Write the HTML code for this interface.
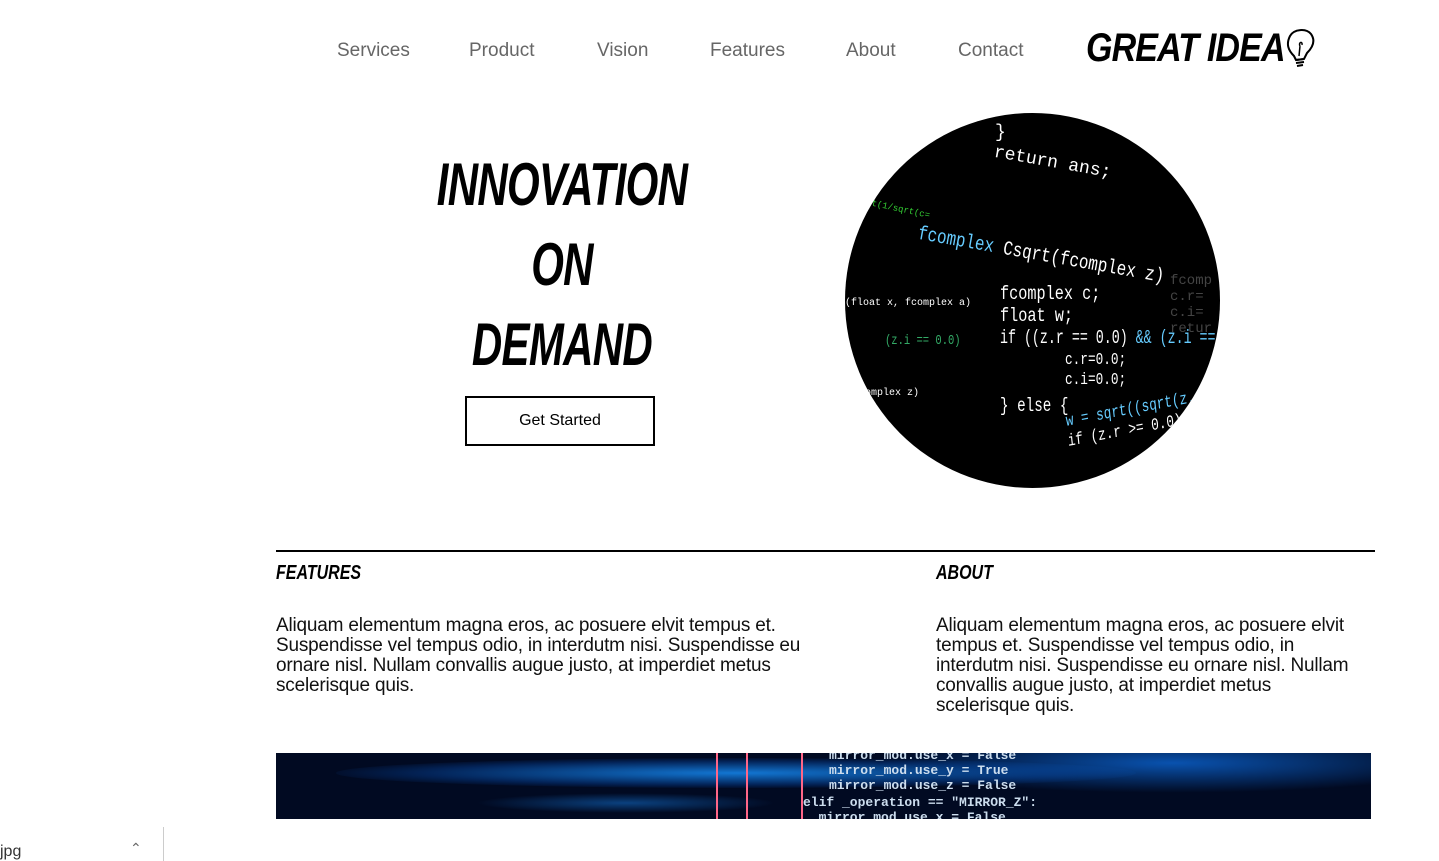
<!DOCTYPE html>
<html><head><meta charset="utf-8"><style>
body{margin:0;width:1439px;height:861px;background:#fff;position:relative;overflow:hidden;font-family:"Liberation Sans",sans-serif}
.nav{position:absolute;top:40px;font-size:19px;color:#666}
.hd{position:absolute;font-weight:bold;font-style:italic;color:#000;transform-origin:left top;white-space:nowrap}
.hl{position:absolute;left:362px;width:400px;text-align:center;font-weight:bold;font-style:italic;font-size:60px;transform:scaleX(0.7);transform-origin:center top;letter-spacing:-1px}
.p{position:absolute;font-size:19px;line-height:20px;color:#111;letter-spacing:-0.2px}
.circle{position:absolute;left:845px;top:113px;width:375px;height:375px;border-radius:50%;background:#000;overflow:hidden;font-family:"Liberation Mono",monospace}
.circle div{position:absolute;white-space:nowrap}
</style></head><body>
<div class="nav" style="left:337px">Services</div>
<div class="nav" style="left:469px">Product</div>
<div class="nav" style="left:597px">Vision</div>
<div class="nav" style="left:710px">Features</div>
<div class="nav" style="left:846px">About</div>
<div class="nav" style="left:958px">Contact</div>
<div class="hd" style="left:1086px;top:26px;font-size:40px;transform:scaleX(0.85);letter-spacing:-1px">GREAT IDEA</div>
<svg style="position:absolute;left:1282px;top:26px" width="34" height="46" viewBox="0 0 34 46"><path d="M12 30 C6 24 4 18 8 10 C12 3 24 2 29 8 C34 15 30 22 25 27 L22 33 L14 34 Z" fill="none" stroke="#000" stroke-width="2"/><path d="M14 34 L22 33 M14 37 L22 36 M15 40 L21 39" stroke="#000" stroke-width="2"/><path d="M17 30 L18 20 M18 20 C16 16 21 15 20 19" fill="none" stroke="#000" stroke-width="1.5"/></svg>

<div class="hl" style="top:150px">INNOVATION</div>
<div class="hl" style="top:230px">ON</div>
<div class="hl" style="top:310px">DEMAND</div>
<div style="position:absolute;left:465px;top:396px;width:186px;height:46px;border:2px solid #000;font-size:16px;line-height:46px;text-align:center">Get Started</div>

<div class="circle">
<div style="left:150px;top:10px;color:#fff;font-size:18px">}</div>
<div style="left:205px;top:5px;color:#fff;font-size:16px;transform:rotate(15deg)">ans=y*sqrt(1.0+temp*</div>
<div style="left:148px;top:40px;color:#fff;font-size:18px;transform:rotate(10deg)">return ans;</div>
<div style="left:75px;top:110px;color:#fff;font-size:20px;transform:rotate(10deg) scaleX(0.8);transform-origin:left top"><span style="color:#6cf">fcomplex</span> Csqrt(fcomplex z)</div>
<div style="left:10px;top:90px;color:#3c3;font-size:9px;transform:rotate(12deg)">sqrt(1/sqrt(c=</div>
<div style="left:155px;top:170px;color:#fff;font-size:19px;transform:scaleX(0.8);transform-origin:left top">fcomplex c;</div>
<div style="left:155px;top:192px;color:#fff;font-size:19px;transform:scaleX(0.8);transform-origin:left top">float w;</div>
<div style="left:155px;top:214px;color:#fff;font-size:19px;transform:scaleX(0.7);transform-origin:left top">if ((z.r == 0.0) <span style="color:#6cf">&amp;&amp; (z.i == 0.0)) {</span></div>
<div style="left:220px;top:238px;color:#fff;font-size:17px;transform:scaleX(0.75);transform-origin:left top">c.r=0.0;</div>
<div style="left:220px;top:258px;color:#fff;font-size:17px;transform:scaleX(0.75);transform-origin:left top">c.i=0.0;</div>
<div style="left:155px;top:282px;color:#fff;font-size:19px;transform:scaleX(0.75);transform-origin:left top">} else {</div>
<div style="left:220px;top:300px;color:#6cf;font-size:17px;transform:scaleX(0.75) rotate(-8deg);transform-origin:left top">w = sqrt((sqrt(z.r</div>
<div style="left:222px;top:320px;color:#fff;font-size:17px;transform:scaleX(0.75) rotate(-8deg);transform-origin:left top">if (z.r &gt;= 0.0)</div>
<div style="left:0px;top:185px;color:#fff;font-size:10px">(float x, fcomplex a)</div>
<div style="left:20px;top:275px;color:#fff;font-size:10px">omplex z)</div>
<div style="left:40px;top:220px;color:#3a6;font-size:14px;transform:scaleX(0.75);transform-origin:left top">(z.i == 0.0)</div>
<div style="left:325px;top:160px;color:#444;font-size:14px">fcomp<br>c.r=<br>c.i=<br>retur</div>
</div>

<div style="position:absolute;left:276px;top:550px;width:1099px;height:2px;background:#000"></div>
<div class="hd" style="left:276px;top:562px;font-size:20px;transform:scaleX(0.8)">FEATURES</div>
<div class="hd" style="left:936px;top:562px;font-size:20px;transform:scaleX(0.8)">ABOUT</div>
<div class="p" style="left:276px;top:616px;width:560px">Aliquam elementum magna eros, ac posuere elvit tempus et. Suspendisse vel tempus odio, in interdutm nisi. Suspendisse eu ornare nisl. Nullam convallis augue justo, at imperdiet metus scelerisque quis.</div>
<div class="p" style="left:936px;top:616px;width:430px">Aliquam elementum magna eros, ac posuere elvit tempus et. Suspendisse vel tempus odio, in interdutm nisi. Suspendisse eu ornare nisl. Nullam convallis augue justo, at imperdiet metus scelerisque quis.</div>

<div style="position:absolute;left:276px;top:753px;width:1095px;height:66px;background:#010a22;overflow:hidden;font-family:'Liberation Mono',monospace;font-size:13px;color:#cde;font-weight:bold;line-height:15px">
<div style="position:absolute;left:60px;top:5px;width:800px;height:30px;border-radius:50%;background:radial-gradient(ellipse at 50% 50%,rgba(20,130,230,.9),rgba(5,60,140,.5) 55%,transparent 75%)"></div>
<div style="position:absolute;left:600px;top:-10px;width:495px;height:50px;background:radial-gradient(ellipse at 60% 40%,rgba(10,90,190,.9),transparent 70%)"></div>
<div style="position:absolute;left:200px;top:40px;width:300px;height:20px;border-radius:50%;background:radial-gradient(ellipse,rgba(20,120,220,.5),transparent 70%)"></div>
<div style="position:absolute;left:440px;top:0;width:2px;height:66px;background:#f68"></div>
<div style="position:absolute;left:470px;top:0;width:2px;height:66px;background:#f68"></div>
<div style="position:absolute;left:525px;top:0;width:2px;height:66px;background:#f68"></div>
<div style="position:absolute;left:553px;top:-5px">mirror_mod.use_x = False<br>mirror_mod.use_y = True<br>mirror_mod.use_z = False</div>
<div style="position:absolute;left:527px;top:42px">elif _operation == "MIRROR_Z":<br>&nbsp;&nbsp;mirror_mod.use_x = False</div>
</div>

<div style="position:absolute;left:0;top:843px;font-size:16px;color:#333">jpg</div>
<div style="position:absolute;left:130px;top:840px;font-size:14px;color:#666">&#8963;</div>
<div style="position:absolute;left:163px;top:827px;width:1px;height:34px;background:#ccc"></div>
</body></html>
